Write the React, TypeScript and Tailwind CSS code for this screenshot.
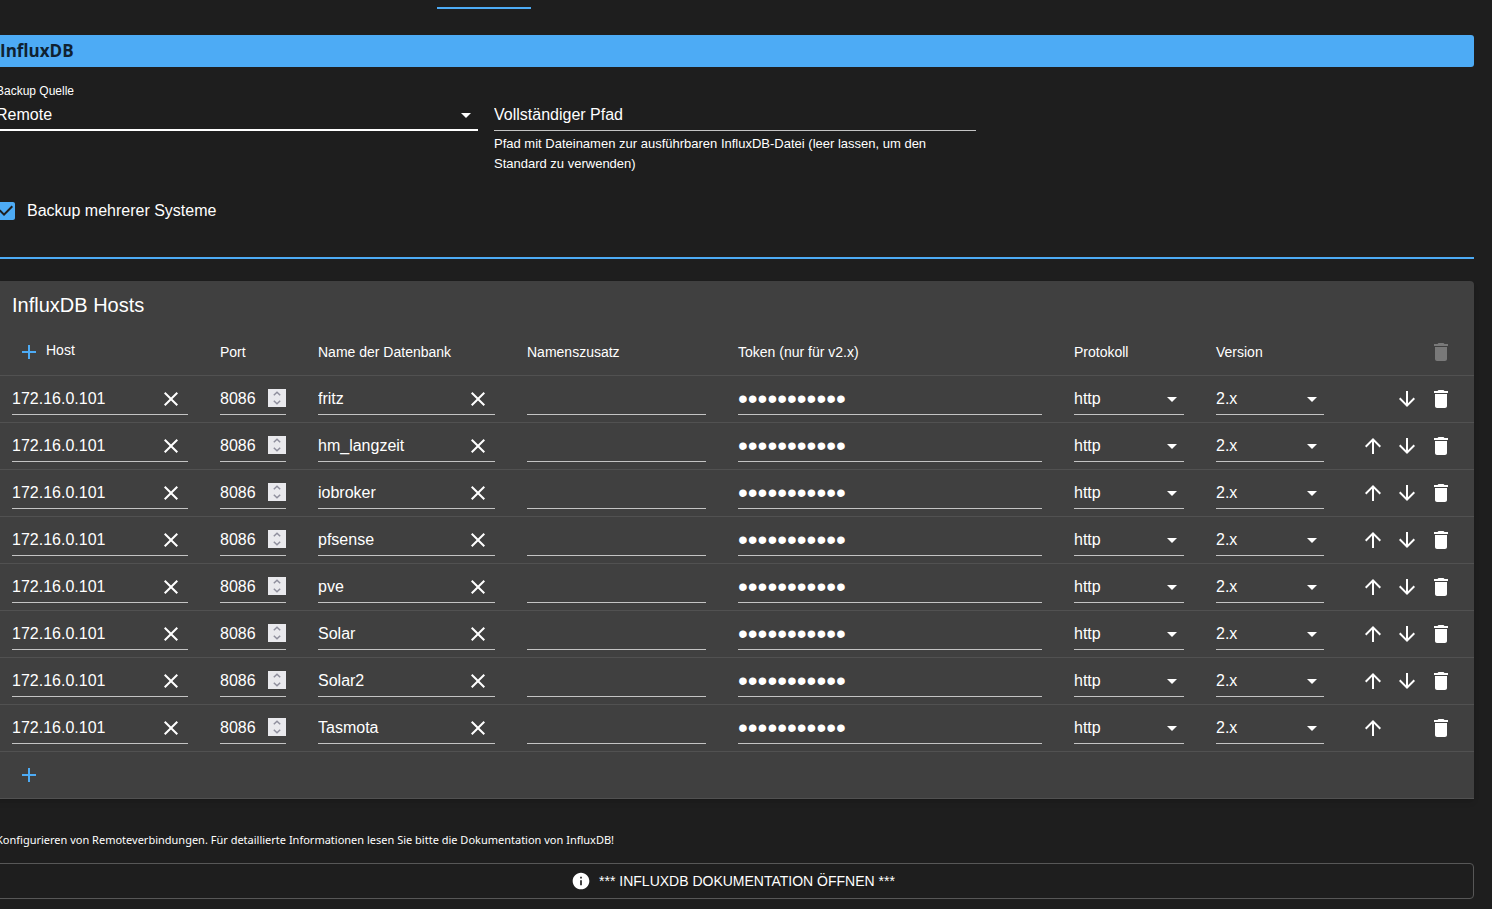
import { useState } from 'react';

const ICONS = {
  add: 'M19 13h-6v6h-2v-6H5v-2h6V5h2v6h6z',
  close: 'M19 6.41 17.59 5 12 10.59 6.41 5 5 6.41 10.59 12 5 17.59 6.41 19 12 13.41 17.59 19 19 17.59 13.41 12z',
  dropDown: 'm7 10 5 5 5-5z',
  up: 'm4 12 1.41 1.41L11 7.83V20h2V7.83l5.58 5.59L20 12l-8-8z',
  down: 'm20 12-1.41-1.41L13 16.17V4h-2v12.17l-5.58-5.59L4 12l8 8z',
  trash: 'M6 19c0 1.1.9 2 2 2h8c1.1 0 2-.9 2-2V7H6zM19 4h-3.5l-1-1h-5l-1 1H5v2h14z',
  info: 'M12 2C6.48 2 2 6.48 2 12s4.48 10 10 10 10-4.48 10-10S17.52 2 12 2m1 15h-2v-6h2zm0-8h-2V7h2z',
  checkedBox:
    'M19 3H5c-1.11 0-2 .9-2 2v14c0 1.1.89 2 2 2h14c1.11 0 2-.9 2-2V5c0-1.1-.89-2-2-2zm-9 14-5-5 1.41-1.41L10 14.17l7.59-7.59L19 8z',
  emptyBox: 'M19 5v14H5V5zm0-2H5c-1.1 0-2 .9-2 2v14c0 1.1.9 2 2 2h14c1.1 0 2-.9 2-2V5c0-1.1-.9-2-2-2',
};

function Icon({ name, className = 'size-6' }: { name: keyof typeof ICONS; className?: string }) {
  return (
    <svg viewBox="0 0 24 24" fill="currentColor" aria-hidden="true" className={className}>
      <path d={ICONS[name]} />
    </svg>
  );
}

function IconButton({
  icon,
  label,
  onClick,
  disabled,
  className = '',
}: {
  icon: keyof typeof ICONS;
  label: string;
  onClick?: () => void;
  disabled?: boolean;
  className?: string;
}) {
  return (
    <button
      type="button"
      aria-label={label}
      onClick={onClick}
      disabled={disabled}
      className={`flex size-[34px] shrink-0 items-center justify-center rounded-full ${className}`}
    >
      <Icon name={icon} />
    </button>
  );
}

const LINE = 'flex h-8 items-center border-b border-[#c4c4c4]';
const FIELD = 'h-6 w-full min-w-0 flex-1 appearance-none bg-transparent text-base outline-none';

function TextCell({ label, value, onChange }: { label: string; value: string; onChange: (v: string) => void }) {
  return (
    <div className={LINE}>
      <input aria-label={label} value={value} onChange={(e) => onChange(e.target.value)} className={FIELD} />
      {value && <IconButton icon="close" label={`${label} leeren`} onClick={() => onChange('')} />}
    </div>
  );
}

function PortCell({ value, onChange }: { value: number; onChange: (v: number) => void }) {
  return (
    <div className={LINE}>
      <input
        aria-label="Port"
        type="number"
        value={value}
        onChange={(e) => onChange(Number(e.target.value))}
        className="h-6 w-full min-w-0 flex-1 bg-transparent text-base outline-none [appearance:textfield] [&::-webkit-inner-spin-button]:appearance-none"
      />
      <div className="mb-0.5 flex size-[18px] shrink-0 flex-col bg-[#e9e9ed] text-[#8f8f9d]">
        <button type="button" aria-label="Port erhöhen" onClick={() => onChange(value + 1)} className="flex h-[9px] items-center justify-center">
          <svg viewBox="0 0 8 5" className="h-[5px] w-2" fill="none" stroke="currentColor" strokeWidth="1.5">
            <path d="M.8 4.2 4 1.2l3.2 3" />
          </svg>
        </button>
        <button type="button" aria-label="Port verringern" onClick={() => onChange(value - 1)} className="flex h-[9px] items-center justify-center">
          <svg viewBox="0 0 8 5" className="h-[5px] w-2" fill="none" stroke="currentColor" strokeWidth="1.5">
            <path d="m.8 .8 3.2 3 3.2-3" />
          </svg>
        </button>
      </div>
    </div>
  );
}

function SelectCell({
  label,
  options,
  value,
  onChange,
}: {
  label: string;
  options: string[];
  value: string;
  onChange: (v: string) => void;
}) {
  return (
    <div className={`relative ${LINE}`}>
      <select aria-label={label} value={value} onChange={(e) => onChange(e.target.value)} className={FIELD}>
        {options.map((o) => (
          <option key={o} className="bg-[#404040]">
            {o}
          </option>
        ))}
      </select>
      <Icon name="dropDown" className="pointer-events-none absolute right-0 size-6" />
    </div>
  );
}

type Host = {
  id: number;
  host: string;
  port: number;
  db: string;
  suffix: string;
  token: string;
  protocol: string;
  version: string;
};

const makeHost = (id: number, db: string): Host => ({
  id,
  host: '172.16.0.101',
  port: 8086,
  db,
  suffix: '',
  token: 'xxxxxxxxxxx',
  protocol: 'http',
  version: '2.x',
});

const INITIAL = ['fritz', 'hm_langzeit', 'iobroker', 'pfsense', 'pve', 'Solar', 'Solar2', 'Tasmota'].map((db, i) =>
  makeHost(i, db),
);

const CELL = 'border-b border-[#515151] px-4 py-[7px]';
const HEAD = 'h-[47px] border-b border-[#515151] px-4 text-left text-sm font-normal';

function HostTable() {
  const [hosts, setHosts] = useState(INITIAL);
  const patch = (id: number, change: Partial<Host>) =>
    setHosts((all) => all.map((h) => (h.id === id ? { ...h, ...change } : h)));
  const remove = (id: number) => setHosts((all) => all.filter((h) => h.id !== id));
  const add = () => setHosts((all) => [...all, makeHost(Date.now(), '')]);
  const swap = (a: number, b: number) =>
    setHosts((all) => {
      const next = [...all];
      [next[a], next[b]] = [next[b], next[a]];
      return next;
    });

  return (
    <section className="mt-[22px] overflow-x-auto rounded-t bg-[#404040] shadow-md">
      <h2 className="flex h-12 items-center px-4 text-xl">InfluxDB Hosts</h2>
      <table className="w-full table-fixed border-separate border-spacing-0">
        <colgroup>
          <col className="w-[208px]" />
          <col className="w-[98px]" />
          <col className="w-[209px]" />
          <col className="w-[211px]" />
          <col className="w-[336px]" />
          <col className="w-[142px]" />
          <col className="w-[140px]" />
          <col className="w-[134px]" />
        </colgroup>
        <thead>
          <tr>
            <th className={HEAD}>
              <div className="flex items-center">
                <IconButton icon="add" label="Host hinzufügen" onClick={add} className="text-[#4dabf5]" />
                <span className="pb-1">Host</span>
              </div>
            </th>
            <th className={HEAD}>Port</th>
            <th className={HEAD}>Name der Datenbank</th>
            <th className={HEAD}>Namenszusatz</th>
            <th className={HEAD}>Token (nur für v2.x)</th>
            <th className={HEAD}>Protokoll</th>
            <th className={HEAD}>Version</th>
            <th className={HEAD}>
              <div className="flex justify-end">
                <IconButton icon="trash" label="Alle löschen" disabled className="text-[#797979]" />
              </div>
            </th>
          </tr>
        </thead>
        <tbody>
          {hosts.map((h, i) => (
            <tr key={h.id}>
              <td className={CELL}>
                <TextCell label="Host" value={h.host} onChange={(host) => patch(h.id, { host })} />
              </td>
              <td className={CELL}>
                <PortCell value={h.port} onChange={(port) => patch(h.id, { port })} />
              </td>
              <td className={CELL}>
                <TextCell label="Name der Datenbank" value={h.db} onChange={(db) => patch(h.id, { db })} />
              </td>
              <td className={CELL}>
                <TextCell label="Namenszusatz" value={h.suffix} onChange={(suffix) => patch(h.id, { suffix })} />
              </td>
              <td className={CELL}>
                <div className={LINE}>
                  <input
                    aria-label="Token"
                    type="password"
                    value={h.token}
                    onChange={(e) => patch(h.id, { token: e.target.value })}
                    className="h-7 w-full bg-transparent text-[28px] leading-7 outline-none"
                  />
                </div>
              </td>
              <td className={CELL}>
                <SelectCell
                  label="Protokoll"
                  options={['http', 'https']}
                  value={h.protocol}
                  onChange={(protocol) => patch(h.id, { protocol })}
                />
              </td>
              <td className={CELL}>
                <SelectCell
                  label="Version"
                  options={['1.x', '2.x']}
                  value={h.version}
                  onChange={(version) => patch(h.id, { version })}
                />
              </td>
              <td className="border-b border-[#515151] px-4">
                <div className="grid grid-cols-[34px_34px_34px] justify-end">
                  {i > 0 ? <IconButton icon="up" label="Nach oben" onClick={() => swap(i, i - 1)} /> : <span />}
                  {i < hosts.length - 1 ? (
                    <IconButton icon="down" label="Nach unten" onClick={() => swap(i, i + 1)} />
                  ) : (
                    <span />
                  )}
                  <IconButton icon="trash" label="Löschen" onClick={() => remove(h.id)} />
                </div>
              </td>
            </tr>
          ))}
          <tr>
            <td colSpan={8} className="h-[47px] border-b border-[#515151] px-4">
              <IconButton icon="add" label="Host hinzufügen" onClick={add} className="text-[#4dabf5]" />
            </td>
          </tr>
        </tbody>
      </table>
    </section>
  );
}

export default function App() {
  const [source, setSource] = useState('Remote');
  const [multi, setMulti] = useState(true);

  return (
    <div className="min-h-screen overflow-x-hidden bg-[#1e1e1e] font-['Liberation_Sans',Arial,sans-serif] text-white">
      <main className="-ml-1 pr-[18px] pb-[10px]">
        <div className="pt-[7px] pl-[441px]">
          <div className="h-0.5 w-[94px] bg-[#4dabf5]" />
        </div>

        <h1 className="mt-[26px] flex h-8 items-center rounded-[3px] bg-[#4dabf5] pl-1 font-['Open_Sans',sans-serif] text-[17px] font-bold text-[#0f2231]">
          InfluxDB
        </h1>

        <div className="mt-4 grid grid-cols-3 gap-4">
          <div>
            <label htmlFor="source" className="block text-xs leading-4">
              Backup Quelle
            </label>
            <div className="relative flex h-8 items-center border-b-2 border-white pt-0.5">
              <select id="source" value={source} onChange={(e) => setSource(e.target.value)} className={FIELD}>
                <option className="bg-[#404040]">Remote</option>
                <option className="bg-[#404040]">Lokal</option>
              </select>
              <Icon name="dropDown" className="pointer-events-none absolute right-0 size-6" />
            </div>
          </div>
          <div className="pt-4">
            <div className={LINE}>
              <input
                aria-label="Vollständiger Pfad"
                aria-describedby="path-help"
                placeholder="Vollständiger Pfad"
                className={`${FIELD} placeholder:text-white`}
              />
            </div>
            <p id="path-help" className="mt-[3px] text-[13px] leading-5">
              Pfad mit Dateinamen zur ausführbaren InfluxDB-Datei (leer lassen, um den Standard zu verwenden)
            </p>
          </div>
        </div>

        <label className="mt-[25px] -ml-0.5 flex h-6 w-fit items-center gap-[9px]">
          <span className="grid size-6 text-[#4dabf5]">
            <input
              type="checkbox"
              checked={multi}
              onChange={(e) => setMulti(e.target.checked)}
              className="col-start-1 row-start-1 size-6 appearance-none"
            />
            <Icon
              name={multi ? 'checkedBox' : 'emptyBox'}
              className="pointer-events-none col-start-1 row-start-1 size-6"
            />
          </span>
          Backup mehrerer Systeme
        </label>

        <hr className="mt-[34px] border-t-2 border-[#4dabf5]" />

        <HostTable />

        <p className="mt-8 font-['Noto_Sans',sans-serif] text-[11px] leading-[18px]">
          Konfigurieren von Remoteverbindungen. Für detaillierte Informationen lesen Sie bitte die Dokumentation von
          InfluxDB!
        </p>

        <button
          type="button"
          className="mt-[14px] flex h-9 w-full items-center justify-center gap-2 rounded border border-[#575757] pr-1 text-sm"
        >
          <Icon name="info" className="size-5" />
          *** INFLUXDB DOKUMENTATION ÖFFNEN ***
        </button>
      </main>
    </div>
  );
}
